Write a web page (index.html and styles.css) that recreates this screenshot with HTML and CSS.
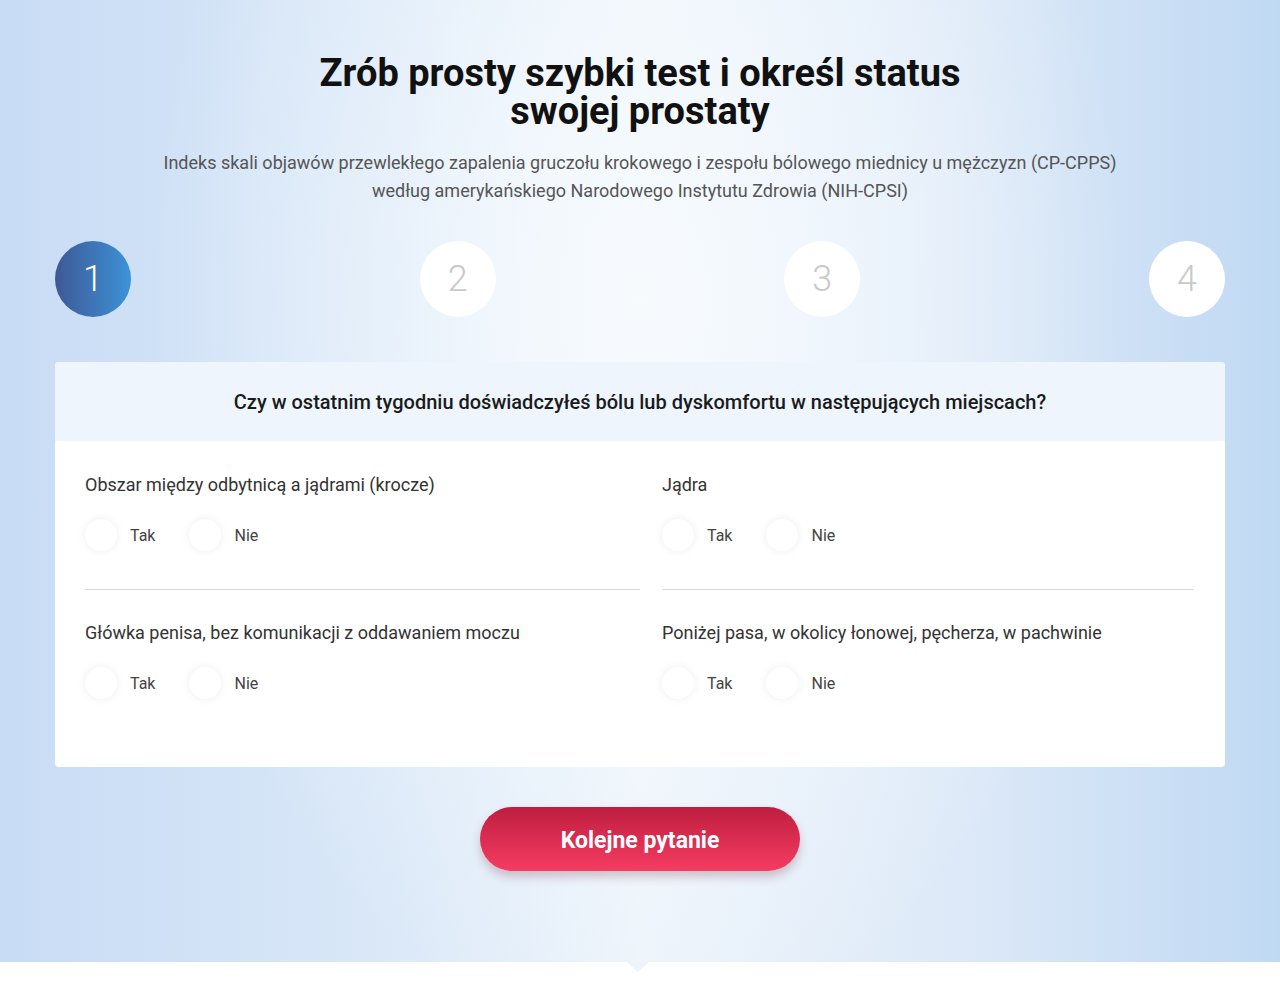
FILE: index.html
```html
<!DOCTYPE html>
<html lang="pl">
<head>
    <meta charset="UTF-8">
    <meta name="viewport" content="width=device-width, initial-scale=1.0">
    <title>Test prostaty</title>
    <link rel="stylesheet" href="styles.css">
</head>
<body>
    <section class="quiz">
        <h1>Zrób prosty szybki test i określ status swojej prostaty</h1>
        <p class="lead">Indeks skali objawów przewlekłego zapalenia gruczołu krokowego i zespołu bólowego miednicy u mężczyzn (CP-CPPS) według amerykańskiego Narodowego Instytutu Zdrowia (NIH-CPSI)</p>

        <div class="steps">
            <span class="step active">1</span>
            <span class="step">2</span>
            <span class="step">3</span>
            <span class="step">4</span>
        </div>

        <div class="card">
            <div class="card-head">Czy w ostatnim tygodniu doświadczyłeś bólu lub dyskomfortu w następujących miejscach?</div>
            <div class="card-body">
                <div class="item">
                    <div class="label">Obszar między odbytnicą a jądrami (krocze)</div>
                    <div class="options">
                        <label class="opt"><span class="dot"></span>Tak</label>
                        <label class="opt"><span class="dot"></span>Nie</label>
                    </div>
                </div>
                <div class="item">
                    <div class="label">Jądra</div>
                    <div class="options">
                        <label class="opt"><span class="dot"></span>Tak</label>
                        <label class="opt"><span class="dot"></span>Nie</label>
                    </div>
                </div>
                <div class="item last">
                    <div class="label">Główka penisa, bez komunikacji z oddawaniem moczu</div>
                    <div class="options">
                        <label class="opt"><span class="dot"></span>Tak</label>
                        <label class="opt"><span class="dot"></span>Nie</label>
                    </div>
                </div>
                <div class="item last">
                    <div class="label">Poniżej pasa, w okolicy łonowej, pęcherza, w pachwinie</div>
                    <div class="options">
                        <label class="opt"><span class="dot"></span>Tak</label>
                        <label class="opt"><span class="dot"></span>Nie</label>
                    </div>
                </div>
            </div>
        </div>

        <button class="next" type="button">Kolejne pytanie</button>
    </section>
    <div class="below"></div>
</body>
</html>
```

FILE: styles.css
```css
body {
    margin: 0;
    font-family: Roboto, "Liberation Sans", sans-serif;
    color: #222;
    background: #fff;
}

.quiz {
    position: relative;
    height: 962px;
    box-sizing: border-box;
    padding: 54px 55px 0;
    text-align: center;
    background:
        radial-gradient(ellipse 650px 1000px at 640px 300px, rgba(247, 251, 254, 0.95), rgba(247, 251, 254, 0) 75%),
        linear-gradient(to right, #c8dcf5 0%, #dae8f8 30%, #edf4fb 50%, #dde9f8 75%, #c0d9f3 100%);
}

/* little pointer under the section */
.quiz::after {
    content: "";
    position: absolute;
    left: 627px;
    bottom: -10px;
    border-left: 11px solid transparent;
    border-right: 11px solid transparent;
    border-top: 10px solid #eef4fb;
}

h1 {
    margin: 0 auto;
    max-width: 700px;
    font-size: 38px;
    line-height: 38px;
    font-weight: 700;
    color: #111;
}

.lead {
    margin: 19px auto 0;
    max-width: 960px;
    font-size: 18px;
    line-height: 28px;
    color: #555;
}

.steps {
    display: flex;
    justify-content: space-between;
    margin-top: 36px;
}

.step {
    width: 76px;
    height: 76px;
    border-radius: 50%;
    background: #fff;
    color: #c9c9c9;
    font-size: 36px;
    font-weight: 300;
    line-height: 76px;
    text-align: center;
}

.step.active {
    background: linear-gradient(to right, #3f5895, #3c93d8);
    color: #fff;
}

.card {
    margin-top: 45px;
    background: #fff;
    border-radius: 4px;
    overflow: hidden;
    text-align: left;
}

.card-head {
    background: #eef5fc;
    height: 79px;
    line-height: 81px;
    text-align: center;
    font-size: 20px;
    font-weight: 500;
    color: #1b1b1b;
}

.card-body {
    display: grid;
    grid-template-columns: 555px 532px;
    column-gap: 22px;
    padding: 31px 31px 30px 30px;
}

.item {
    padding: 0 0 38px;
    border-bottom: 1px solid #dddddd;
}

.item.last {
    border-bottom: none;
    padding-top: 30px;
}

.label {
    font-size: 18px;
    line-height: 26px;
    color: #333;
}

.options {
    display: flex;
    gap: 34px;
    margin-top: 21px;
}

.opt {
    display: flex;
    align-items: center;
    gap: 13px;
    font-size: 16px;
    color: #444;
}

.dot {
    width: 32px;
    height: 32px;
    border-radius: 50%;
    background: #fff;
    box-shadow: 0 0 10px rgba(0, 0, 0, 0.07);
}

.next {
    display: block;
    margin: 40px auto 0;
    width: 320px;
    height: 64px;
    padding-top: 3px;
    border: none;
    border-radius: 32px;
    background: linear-gradient(to bottom, #be1e40, #f53c61);
    box-shadow: 0 6px 10px rgba(120, 40, 60, 0.25);
    color: #fff;
    font-family: Roboto, "Liberation Sans", sans-serif;
    font-size: 23px;
    font-weight: 700;
}

.below {
    height: 38px;
}
```
